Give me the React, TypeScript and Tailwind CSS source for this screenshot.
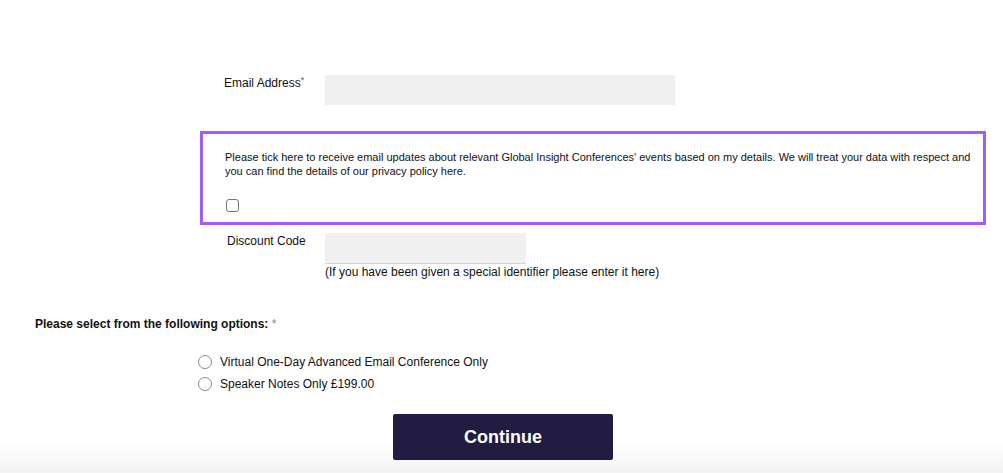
import React from "react";

const Radio = ({ label }: { label: string }) => (
    <label className="flex h-[22px] items-center gap-[8px]">
        <span className="block h-[14px] w-[14px] rounded-full border border-[#8a8a8a] bg-white" />
        <span className="text-[12px] text-[#111]">{label}</span>
    </label>
);

export default function App() {
    return (
        <div className="relative min-h-[473px] w-full overflow-hidden bg-white font-['Liberation_Sans',Arial,sans-serif] text-[#111]">
            <div className="pointer-events-none absolute bottom-0 left-0 right-0 h-[30px] bg-gradient-to-b from-white to-[#f2f2f2]" />
            <div className="relative pt-[75px]">
                {/* email */}
                <div className="ml-[224px] flex">
                    <div className="w-[101px] pt-[1px] text-[12px] leading-[14px]">
                        Email Address<sup className="text-[9px] text-[#555]">*</sup>
                    </div>
                    <div className="h-[30px] w-[350px] bg-[#f0f0f0]" />
                </div>

                {/* consent box */}
                <div className="ml-[200px] mt-[26px] w-[786px] border-[3px] border-[#a35cf5] pb-[10px] pl-[22px] pr-[4px] pt-[16px]">
                    <p className="text-[11px] leading-[14px] text-[#111]">
                        Please tick here to receive email updates about relevant Global Insight Conferences' events based on my
                        details. We will treat your data with respect and you can find the details of our privacy policy here.
                    </p>
                    <div className="ml-[1px] mt-[21px] h-[13px] w-[13px] rounded-[3px] border border-[#777] bg-white" />
                </div>

                {/* discount */}
                <div className="ml-[227px] mt-[8px] flex">
                    <div className="w-[98px] pt-[1px] text-[12px] leading-[14px]">Discount Code</div>
                    <div>
                        <div className="h-[31px] w-[201px] border-b border-[#d4d4d4] bg-[#f0f0f0]" />
                        <p className="mt-[1px] text-[12px] leading-[14px]">
                            (If you have been given a special identifier please enter it here)
                        </p>
                    </div>
                </div>

                {/* options */}
                <p className="ml-[35px] mt-[38px] text-[12px] font-bold leading-[14px]">
                    Please select from the following options: <span className="font-normal text-[#888]">*</span>
                </p>
                <div className="ml-[198px] mt-[20px] flex flex-col">
                    <Radio label="Virtual One-Day Advanced Email Conference Only" />
                    <Radio label="Speaker Notes Only £199.00" />
                </div>

                <div className="mt-[19px] flex justify-center pl-[3px]">
                    <button className="h-[46px] w-[220px] rounded-[2px] bg-[#221c42] text-[18px] font-bold text-white">
                        Continue
                    </button>
                </div>
            </div>
        </div>
    );
}
